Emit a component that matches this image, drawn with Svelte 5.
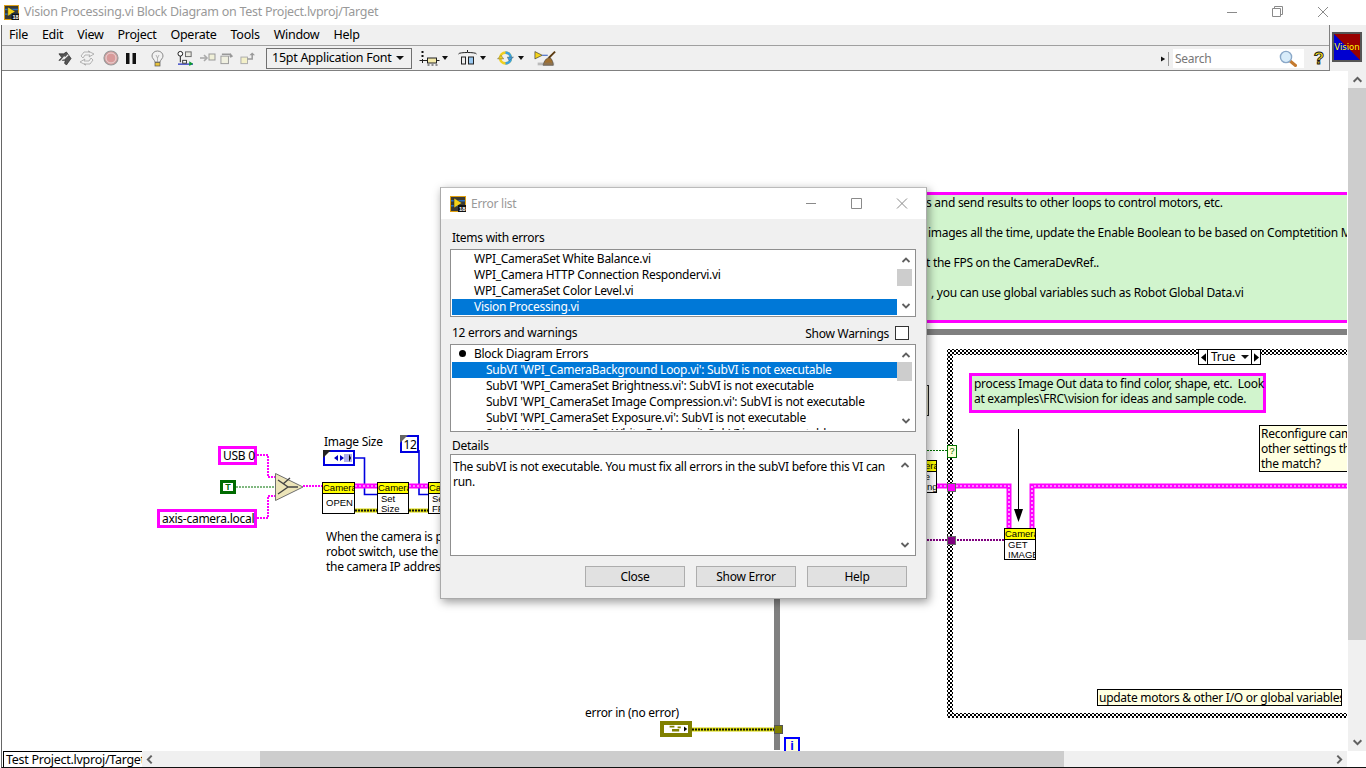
<script>
  const menus = ['File', 'Edit', 'View', 'Project', 'Operate', 'Tools', 'Window', 'Help'];
  const itemsWithErrors = [
    'WPI_CameraSet White Balance.vi',
    'WPI_Camera HTTP Connection Respondervi.vi',
    'WPI_CameraSet Color Level.vi',
    'Vision Processing.vi'
  ];
  const errors = [
    "SubVI 'WPI_CameraBackground Loop.vi': SubVI is not executable",
    "SubVI 'WPI_CameraSet Brightness.vi': SubVI is not executable",
    "SubVI 'WPI_CameraSet Image Compression.vi': SubVI is not executable",
    "SubVI 'WPI_CameraSet Exposure.vi': SubVI is not executable",
    "SubVI 'WPI_CameraSet White Balance.vi': SubVI is not executable"
  ];
  const nodes = [
    { x: 322, y: 482, w: 33, h: 32, lines: ['OPEN'], cls: 'open' },
    { x: 377, y: 482, w: 32, h: 32, lines: ['Set', 'Size'], cls: '' },
    { x: 428, y: 482, w: 32, h: 32, lines: ['Set', 'FPS'], cls: '' },
    { x: 1004, y: 528, w: 32, h: 32, lines: ['GET', 'IMAGE'], cls: '' }
  ];
  const greenLines = [
    { cls: 'gl1', t: 's and send results to other loops to control motors, etc.' },
    { cls: 'gl2', t: 'images all the time, update the Enable Boolean to be based on Comptetition Mode' },
    { cls: 'gl3', t: 't the FPS on the CameraDevRef..' },
    { cls: 'gl4', t: ', you can use global variables such as Robot Global Data.vi' }
  ];
</script>

{#snippet lvIcon()}
  <svg class="lv" viewBox="0 0 16 16">
    <rect x=".5" y=".5" width="15" height="15" fill="#3a3a34" stroke="#e0a010" />
    <rect x="1" y="4" width="14" height="1.5" fill="#2a6fc0" />
    <rect x="1" y="9" width="14" height="1.5" fill="#2a6fc0" />
    <path d="M4 2 L12 7 L4 12 Z" fill="#f3d21a" stroke="#222" stroke-width=".5" />
    <rect x="8" y="9" width="8" height="7" fill="#111" />
    <text x="9" y="15" class="lvt">18</text>
  </svg>
{/snippet}

{#snippet chevUp()}
  <svg class="chev" viewBox="0 0 10 6"><path d="M1.5 5 L5 1.5 L8.5 5" /></svg>
{/snippet}
{#snippet chevDown()}
  <svg class="chev" viewBox="0 0 10 6"><path d="M1.5 1 L5 4.5 L8.5 1" /></svg>
{/snippet}

<div class="app">
  <header class="title">
    {@render lvIcon()}
    <span class="title-text">Vision Processing.vi Block Diagram on Test Project.lvproj/Target</span>
    <div class="win">
      <svg viewBox="0 0 120 12"><path d="M0 6.5 H10" /><path d="M45.5 2.5 H53.5 V10.5 H45.5 Z M47.5 2.5 V0.5 H55.5 V8.5 H53.5" /><path d="M91 1 L101 11 M101 1 L91 11" /></svg>
    </div>
  </header>

  <div class="bars">
    <div class="bars-main">
      <nav class="menu">
        {#each menus as m}<span>{m}</span>{/each}
      </nav>
      <div class="toolbar">
        <div class="tools-a">
          <svg class="ic w15" viewBox="0 0 15 16"><path d="M1 3 L6 3 L9 1 L14 8 L9 15 L7 13 L8 10 L1 10 L4 7 Z" fill="#555" stroke="#222" stroke-width=".7" /><path d="M2 12 L7 6 L6 9 L11 4" stroke="#eee" stroke-width="1.2" fill="none" /></svg>
          <svg class="ic w16" viewBox="0 0 16 16"><path d="M2 6 L5 2 H11 L9 1 L15 4 L10 7 L11 5 H6 L4 8 Z M14 10 L11 14 H5 L7 15 L1 12 L6 9 L5 11 H10 L12 8 Z" fill="#f2f2f2" stroke="#aaa" stroke-width=".9" /></svg>
          <svg class="ic w16" viewBox="0 0 16 16"><circle cx="8" cy="8" r="7" fill="#d9a0a0" stroke="#999" stroke-width="1.2" /><circle cx="8" cy="8" r="5" fill="#d89a9a" stroke="#e9d6d6" /></svg>
          <svg class="ic w10" viewBox="0 0 10 11"><rect width="3.5" height="11" /><rect x="6.5" width="3.5" height="11" /></svg>
          <svg class="ic bulb" viewBox="0 0 13 17"><path d="M6.5 1 C3 1 1 3.5 1 6 C1 8.5 3.5 9.5 4 12 H9 C9.5 9.5 12 8.5 12 6 C12 3.5 10 1 6.5 1 Z" fill="#f1f1f1" stroke="#8a8a8a" /><path d="M5 5 L6.5 8 L8 5 M6.5 8 V12" stroke="#999" fill="none" stroke-width=".7" /><rect x="4" y="12.5" width="5" height="3.5" fill="#e8c23a" stroke="#555" stroke-width=".7" /></svg>
          <svg class="ic retain" viewBox="0 0 18 17"><circle cx="3.5" cy="4" r="2.5" fill="#fff" stroke="#111" /><path d="M3.5 6.5 V13" stroke="#111" /><path d="M1 15 H17" stroke="#1c2cc0" stroke-width="1.3" /><rect x="9" y="2" width="6" height="5" fill="#e8e8e0" stroke="#666" /><rect x="6" y="11" width="4" height="3" fill="#fff" stroke="#333" /><path d="M13 12 L17 14.5 L13 17 Z" fill="#0a9a30" /></svg>
          <svg class="ic step1" viewBox="0 0 16 12"><path d="M0 6 H6" stroke="#aaa" stroke-width="1.6" /><path d="M4 3 L7 6 L4 9" stroke="#aaa" stroke-width="1.6" fill="none" /><rect x="9" y="2" width="6" height="6" fill="#f0f0d8" stroke="#999" /></svg>
          <svg class="ic step2" viewBox="0 0 16 14"><rect x="1" y="5" width="8" height="8" fill="#f0f0e0" stroke="#999" /><path d="M2 3 H11 V6" stroke="#999" stroke-width="1.6" fill="none" /><path d="M9 5 L11 8 L14 5 Z" fill="#999" transform="rotate(-90 11 5)" /></svg>
          <svg class="ic step3" viewBox="0 0 16 14"><rect x="1" y="6" width="7" height="7" fill="#f3f0c8" stroke="#aaa" /><path d="M8 8 H13 V3" stroke="#999" stroke-width="1.6" fill="none" /><path d="M10 4 L13 1 L16 4 Z" fill="#999" /></svg>
        </div>
        <div class="font-select"><span>15pt Application Font</span><i class="tri"></i></div>
        <div class="tools-b">
          <div class="drop"><svg class="ic t22" viewBox="0 0 20 16"><rect x="2" y="1" width="2" height="2" /><rect x="2" y="5" width="2" height="2" /><path d="M0 10.5 H20" stroke="#222" /><path d="M3 9 V13" stroke="#222" /><rect x="8" y="8" width="9" height="5" fill="#f3e9a8" stroke="#222" /><path d="M8 15 H10 M12 15 H14 M16 15 H18" stroke="#222" /></svg><i class="tri s"></i></div>
          <div class="drop"><svg class="ic t22" viewBox="0 0 20 16"><path d="M1 4 C1 2 19 2 19 4" stroke="#222" fill="none" /><path d="M10 0 V2" stroke="#222" /><rect x="4" y="7" width="4" height="7" fill="#eee" stroke="#222" /><rect x="11" y="7" width="5" height="7" fill="#9ac8f0" stroke="#222" /></svg><i class="tri s"></i></div>
          <div class="drop"><svg class="ic t22" viewBox="0 0 20 18"><circle cx="10" cy="9" r="6" fill="none" stroke="#f0d020" stroke-width="3" /><path d="M10 3 A6 6 0 0 1 10 15" fill="none" stroke="#3aa0e0" stroke-width="3" /><path d="M5 6 L1 10 H8 Z" fill="#f0d020" stroke="#555" stroke-width=".5" /><path d="M14 12 L19 8 H12 Z" fill="#3aa0e0" stroke="#555" stroke-width=".5" /></svg><i class="tri s"></i></div>
          <svg class="ic clean" viewBox="0 0 24 18"><path d="M1 2 L9 6 L1 10 Z" fill="#f3d21a" stroke="#333" stroke-width=".7" /><path d="M9 6 H15" stroke="#1a4ac0" /><path d="M16 9 L23 2" stroke="#5a3a10" stroke-width="2" /><path d="M10 16 C12 10 15 8 18 9 C20 11 21 14 21 17 H10 Z" fill="#a07030" stroke="#333" stroke-width=".6" /><rect x="4" y="14" width="18" height="3" fill="#777" opacity=".45" /></svg>
        </div>
        <div class="tools-c">
          <svg class="mini" viewBox="0 0 6 6"><path d="M0 0 L5 3 L0 6 Z" /></svg>
          <i class="sep"></i>
          <div class="search">
            <span>Search</span>
            <svg viewBox="0 0 18 17"><path d="M10.5 10.5 L16.5 15.5" stroke="#c47a2e" stroke-width="3" stroke-linecap="round" /><circle cx="7" cy="7" r="5.6" fill="#d8ecfa" stroke="#8aa8c8" stroke-width="1.4" /></svg>
          </div>
          <svg class="help" viewBox="0 0 12 15"><text x="6" y="13" class="q">?</text></svg>
        </div>
      </div>
    </div>
    <div class="vi-panel">
      <div class="vi-icon">
        <svg viewBox="0 0 26 26"><rect width="26" height="26" fill="#0000d0" /><path d="M0 0 H26 V26 Z" fill="#990000" /><text x="13" y="15.5" class="vt">Vision</text></svg>
      </div>
    </div>
  </div>

  <div class="mid">
    <main class="canvas">
      <div class="diagram">
        <svg class="wires" viewBox="0 0 1366 768">
          <defs>
            <pattern id="chk" width="4" height="4" patternUnits="userSpaceOnUse">
              <rect width="4" height="4" fill="#fff" />
              <rect width="2" height="2" fill="#000" />
              <rect x="2" y="2" width="2" height="2" fill="#000" />
            </pattern>
          </defs>
          <!-- while loop -->
          <rect x="600" y="329" width="747" height="6" fill="#808080" />
          <rect x="774" y="590" width="6" height="160" fill="#808080" />
          <!-- case structure -->
          <rect x="947" y="349" width="400" height="6" fill="url(#chk)" />
          <rect x="947" y="349" width="6" height="369" fill="url(#chk)" />
          <rect x="947" y="713" width="400" height="5" fill="url(#chk)" />
          <!-- string wires -->
          <g class="pink-thin">
            <path d="M257 455 H268 V477 H276" />
            <path d="M257 518 H268 V496 H276" />
            <path d="M303 486 H322" />
          </g>
          <path d="M236 487 H276" class="green-dot" />
          <!-- blue wires -->
          <path d="M354 458 H364.500 V494.500 H377" class="blue" />
          <path d="M419 450 V494.500 H428" class="blue" />
          <!-- refnum wires -->
          <g class="ref">
            <path d="M355 486 H377" /><path d="M409 486 H428" />
            <path d="M936 486 H1009 V528" /><path d="M1032 528 V486 H1347" />
          </g>
          <g class="ref-in">
            <path d="M355 486 H377" /><path d="M409 486 H428" />
            <path d="M936 486 H1009 V528" /><path d="M1032 528 V486 H1347" />
          </g>
          <!-- error wires -->
          <g class="err"><path d="M355 510.500 H377" /><path d="M409 510.500 H428" /><path d="M692 729.500 H775" /></g>
          <g class="err-in"><path d="M355 510.500 H377" /><path d="M409 510.500 H428" /><path d="M692 729.500 H775" /></g>
          <!-- purple wire and green wire -->
          <path d="M927 540 H1004" class="purple" />
          <path d="M927 450.500 H947" class="green-dot" />
          <!-- tunnels -->
          <rect x="947.500" y="483.500" width="8" height="8" fill="#ff00ff" stroke="#666" />
          <rect x="947.500" y="536.500" width="8" height="8" fill="#800080" stroke="#666" />
          <rect x="774.500" y="725.500" width="8" height="8" fill="#808000" stroke="#555" />
          <!-- select node -->
          <path d="M275.500 473.500 L303 487 L275.500 500.500 Z" fill="#ece4b8" stroke="#6f6f6f" />
          <path d="M278 480 L288 487 L278 494 M288 487 H298 M283 484 L290 478" stroke="#444" stroke-width="1.4" fill="none" />
          <!-- annotation arrow -->
          <path d="M1018.500 429 V512" stroke="#000" />
          <path d="M1014 509 H1023 L1021 515 L1018.500 522 L1016 515 Z" fill="#000" />
        </svg>

        <div class="const str usb">USB 0</div>
        <div class="const str axis">axis-camera.local</div>
        <div class="bool"><b>T</b></div>
        <div class="lbl img-size">Image Size</div>
        <div class="cluster"><i class="corner"></i><svg viewBox="0 0 24 8"><path d="M7 4 L11 1 V7 Z M17 4 L13 1 V7 Z" fill="#0000c0" /><path d="M22 0 V8 L24 4 Z" /></svg></div>
        <div class="const num"><i class="corner c2"></i>12</div>

        {#each nodes as n}
          <div class="node" style:left="{n.x}px" style:top="{n.y}px" style:width="{n.w}px" style:height="{n.h}px">
            <div class="node-h">Camera</div>
            <div class="node-b" class:open={n.cls === 'open'}>{#each n.lines as l}<div>{l}</div>{/each}</div>
          </div>
        {/each}

        <div class="node tail"><div class="node-h">Camera</div><div class="node-b"><div>Write</div><div>Settings</div></div></div>
        <div class="beige"></div>

        <p class="lbl note-cam">When the camera is plugged into the<br />robot switch, use the<br />the camera IP address</p>

        <div class="green-note">
          {#each greenLines as g}<div class="gl {g.cls}">{g.t}</div>{/each}
        </div>

        <div class="selector">
          <i class="sel-btn"><svg viewBox="0 0 6 10"><path d="M0 5 L6 0 V10 Z" /></svg></i>
          <span class="sel-val">True<i class="tri"></i></span>
          <i class="sel-btn"><svg viewBox="0 0 6 10"><path d="M6 5 L0 0 V10 Z" /></svg></i>
        </div>

        <div class="pink-note">process Image Out data to find color, shape, etc.&nbsp; Look<br />at examples\FRC\vision for ideas and sample code.</div>
        <div class="yellow recon">Reconfigure camera<br />other settings that<br />the match?</div>
        <div class="yellow update">update motors &amp; other I/O or global variables</div>
        <div class="term">?</div>

        <div class="lbl err-lbl">error in (no error)</div>
        <div class="err-ctl"><div class="err-in-box"><svg viewBox="0 0 22 10"><path d="M3 1 H9 V3 H3 Z M6 5 H15 V8 H6 Z M13 2 H17 V4 H13 Z" fill="#808000" /><path d="M21 2 L25 5 L21 8 Z" /></svg></div></div>
        <div class="iter">i</div>

        <section class="dialog">
          <header class="d-title">
            {@render lvIcon()}
            <span>Error list</span>
            <svg viewBox="0 0 102 12"><path d="M0 5.500 H10" /><path d="M45.500 .5 H55.500 V10.500 H45.500 Z" /><path d="M91 .5 L101 10.500 M101 .5 L91 10.500" /></svg>
          </header>
          <div class="d-body">
            <div class="d-lab first">Items with errors</div>
            <div class="list l1">
              <div class="rows">
                {#each itemsWithErrors as it, i}<div class="row top" class:sel={i === 3}>{it}</div>{/each}
              </div>
              <div class="vs">{@render chevUp()}<i class="thumb t1"></i>{@render chevDown()}</div>
            </div>
            <div class="d-lab between">
              <span>12 errors and warnings</span>
              <span class="show">Show Warnings<i class="check"></i></span>
            </div>
            <div class="list l2">
              <div class="rows">
                <div class="row top"><i class="dot"></i>Block Diagram Errors</div>
                {#each errors as e, i}<div class="row sub" class:sel={i === 0}>{e}</div>{/each}
              </div>
              <div class="vs">{@render chevUp()}<i class="thumb t2"></i>{@render chevDown()}</div>
            </div>
            <div class="d-lab det">Details</div>
            <div class="list l3">
              <p>The subVI is not executable. You must fix all errors in the subVI before this VI can run.</p>
              <div class="vs plain">{@render chevUp()}{@render chevDown()}</div>
            </div>
            <div class="btns">
              <button>Close</button>
              <button>Show Error</button>
              <button>Help</button>
            </div>
          </div>
        </section>
      </div>
    </main>
    <aside class="vbar">
      <svg class="chev big" viewBox="0 0 10 6"><path d="M1.5 5 L5 1.5 L8.5 5" /></svg>
      <i class="vthumb"></i>
      <svg class="chev big" viewBox="0 0 10 6"><path d="M1.5 1 L5 4.5 L8.5 1" /></svg>
    </aside>
  </div>

  <footer class="bottom">
    <div class="tab">Test Project.lvproj/Target</div>
    <div class="hbar">
      <svg class="chev side" viewBox="0 0 6 10"><path d="M5 1.500 L1.500 5 L5 8.500" /></svg>
      <i class="hthumb"></i>
      <svg class="chev side" viewBox="0 0 6 10"><path d="M1 1.500 L4.500 5 L1 8.500" /></svg>
    </div>
  </footer>
</div>

<style>
  :global(body) { margin: 0; background: #fff; }
  .app {
    width: 1366px; height: 768px; overflow: hidden; display: flex; flex-direction: column;
    font: 12px/16px "Noto Sans", "Open Sans", sans-serif; letter-spacing: -.27px; color: #000; background: #fff;
  }
  .title { height: 25px; flex: none; display: flex; align-items: center; padding-left: 4px; box-sizing: border-box; position: relative; padding-bottom: 1px; }
  .lv { width: 15px; height: 15px; flex: none; }
  .lvt { font: bold 6px "Liberation Sans", sans-serif; fill: #fff; letter-spacing: 0; }
  .title-text { margin-left: 5px; color: #999; font-size: 12.5px; }
  .win { margin-left: auto; width: 120px; height: 12px; margin-right: 19px; }
  .win svg { width: 120px; height: 12px; display: block; overflow: visible; fill: none; stroke: #8a8a8a; }

  .bars { display: flex; height: 46px; flex: none; margin-left: 1px; border-left: 1px solid #666; }
  .bars-main { width: 1327px; flex: none; }
  .menu { height: 20px; background: #f0f0f0; display: flex; gap: 14px; padding-left: 7px; align-items: center; font-size: 12.500px; border-bottom: 1px solid #a0a0a0; }
  .toolbar { height: 24px; background: #f0f0f0; border-bottom: 1px solid #808080; display: flex; align-items: center; position: relative; }
  .tools-a { display: flex; align-items: center; margin-left: 56px; width: 208px; }
  .ic { display: block; flex: none; fill: #111; }
  .w15 { width: 14px; height: 15px; margin-right: 7px; }
  .w16 { width: 16px; height: 16px; margin-right: 8px; }
  .w10 { width: 10px; height: 11px; margin-left: -1px; margin-right: 15px; }
  .bulb { width: 13px; height: 17px; margin-right: 13px; }
  .retain { width: 17px; height: 16px; margin-right: 6px; }
  .step1 { width: 16px; height: 12px; margin-right: 4px; }
  .step2 { width: 15px; height: 14px; margin-right: 5px; }
  .step3 { width: 15px; height: 14px; }
  .font-select { width: 146px; height: 21px; box-sizing: border-box; border: 1px solid #707070; display: flex; align-items: center; padding: 0 7px 0 5px; justify-content: space-between; font-size: 12.500px; }
  .tri { display: inline-block; width: 0; height: 0; border-left: 4px solid transparent; border-right: 4px solid transparent; border-top: 4px solid #111; }
  .tri.s { border-left-width: 3px; border-right-width: 3px; margin-left: 1px; }
  .tools-b { display: flex; align-items: center; margin-left: 7px; gap: 9px; }
  .drop { display: flex; align-items: center; gap: 1px; }
  .t22 { width: 21px; height: 16px; }
  .clean { width: 22px; height: 18px; margin-left: 1px; }
  .tools-c { position: absolute; left: 1158px; top: 3px; display: flex; align-items: center; height: 19px; }
  .mini { width: 5px; height: 6px; fill: #111; margin-left: 1px; }
  .sep { width: 1px; height: 14px; background: #999; margin: 0 4px 0 2px; }
  .search { width: 131px; height: 19px; background: #fff; display: flex; align-items: center; justify-content: space-between; padding: 0 7px 0 2px; box-sizing: border-box; color: #777; }
  .search svg { width: 18px; height: 17px; }
  .help { width: 12px; height: 15px; margin-left: 9px; }
  .q { font: bold 17px "Liberation Sans", sans-serif; fill: #ffe81a; stroke: #111; stroke-width: .9; text-anchor: middle; letter-spacing: 0; }
  .vi-panel { flex: 1; background: #fff; border-left: 1px solid #808080; background: #f0f0f0; border-bottom: 0; padding: 7px 0 0 2px; }
  .vi-icon { width: 30px; height: 30px; border: 2px solid #555; box-sizing: border-box; outline: 1px solid #eee; }
  .vi-icon svg { width: 26px; height: 26px; display: block; }
  .vt { font: 8.5px "DejaVu Sans", sans-serif; fill: #ff0; text-anchor: middle; letter-spacing: 0; }

  .mid { flex: 1; display: flex; min-height: 0; margin-left: 1px; border-left: 1px solid #666; }
  .canvas { width: 1345px; flex: none; position: relative; overflow: hidden; background: #fff; }
  .diagram { position: absolute; left: -2px; top: -71px; width: 1366px; height: 768px; }
  .wires { position: absolute; inset: 0; width: 1366px; height: 768px; fill: none; }
  .pink-thin path { stroke: #ff00ff; stroke-width: 2; stroke-dasharray: 2 1; fill: none; }
  .green-dot { stroke: #007000; stroke-width: 1; stroke-dasharray: 2 1; fill: none; }
  .blue { stroke: #0000e0; stroke-width: 1.6; fill: none; }
  .ref path { stroke: #ff00ff; stroke-width: 5; fill: none; }
  .ref-in path { stroke: #fff; stroke-width: 1.2; stroke-dasharray: 2 2; fill: none; }
  .err path { stroke: #808000; stroke-width: 4; fill: none; }
  .err-in path { stroke: #ffff00; stroke-width: 2; fill: none; stroke-dasharray: 2 1; }
  .err-in path { stroke: #111; }
  .err path { stroke: #d8d800; }
  .purple { stroke: #800080; stroke-width: 2; stroke-dasharray: 2 1; fill: none; }

  .const { position: absolute; box-sizing: border-box; background: #fff; white-space: nowrap; }
  .str { border: 3px solid #ff00ff; line-height: 13px; padding-left: 2px; }
  .usb { left: 218px; top: 446px; width: 39px; height: 19px; }
  .axis { left: 157px; top: 509px; width: 100px; height: 19px; }
  .bool { position: absolute; left: 220px; top: 480px; width: 16px; height: 14px; background: #006b00; display: flex; align-items: center; justify-content: center; }
  .bool b { width: 10px; height: 8px; background: #fff; color: #006b00; font: bold 9px/8px "Liberation Sans", sans-serif; letter-spacing: 0; text-align: center; }
  .lbl { position: absolute; margin: 0; white-space: nowrap; }
  .img-size { left: 324px; top: 434px; }
  .cluster { position: absolute; left: 323px; top: 450px; width: 32px; height: 16px; border: 2px solid #0000e0; box-sizing: border-box; background: #fff; padding: 2px 1px; }
  .cluster svg { display: block; width: 26px; height: 8px; background: linear-gradient(90deg, transparent 70%, #b0b0ee 70%); }
  .corner { position: absolute; left: -2px; top: -2px; border-top: 8px solid #222; border-right: 8px solid transparent; }
  .num { left: 400px; top: 435px; width: 19px; height: 18px; border: 2px solid #0000e0; line-height: 15px; text-align: center; padding-left: 1px; }
  .c2 { border-top-color: #666; }
  .node { position: absolute; box-sizing: border-box; border: 1px solid #000; background: #fff; overflow: hidden; font: 9px/10px "Liberation Sans", sans-serif; letter-spacing: 0; }
  .node-h { height: 10px; background: #ffff00; border-bottom: 1px solid #000; text-align: center; font-size: 9.500px; line-height: 10px; }
  .node-b { padding: 0 0 0 3px; font-size: 9.500px; }
  .node-b div { line-height: 10px; }
  .node-b.open { padding-top: 4px; }
  .tail { left: 904px; top: 460px; width: 33px; height: 33px; }
  .beige { position: absolute; left: 900px; top: 385px; width: 29px; height: 31px; box-sizing: border-box; border: 1px solid #222; background: #e8e4c8; }
  .note-cam { left: 326px; top: 529px; line-height: 15px; }

  .green-note { position: absolute; left: 600px; top: 192px; width: 747px; height: 131px; box-sizing: border-box; border-top: 3px solid #ff00ff; border-bottom: 3px solid #ff00ff; background: #d1f4cd; overflow: hidden; }
  .gl { position: absolute; white-space: nowrap; }
  .gl1 { left: 326px; top: 0px; }
  .gl2 { left: 328px; top: 30px; }
  .gl3 { left: 326px; top: 60px; }
  .gl4 { left: 331px; top: 90px; }
  .selector { position: absolute; left: 1198px; top: 349px; width: 63px; height: 16px; display: flex; box-sizing: border-box; border: 1px solid #000; background: #fff; }
  .sel-btn { width: 8px; flex: none; display: flex; align-items: center; justify-content: center; }
  .sel-btn svg { width: 5px; height: 9px; fill: #000; }
  .sel-btn:first-child { border-right: 1px solid #000; }
  .sel-btn:last-child { border-left: 1px solid #000; }
  .sel-val { flex: 1; padding-left: 3px; display: flex; align-items: center; justify-content: space-between; padding-right: 2px; line-height: 14px; font-style: normal; }
  .pink-note { position: absolute; left: 969px; top: 373px; width: 297px; height: 40px; box-sizing: border-box; border: 3px solid #ff00ff; background: #d1f4cd; padding: 0 0 0 2px; line-height: 15px; white-space: nowrap; }
  .yellow { position: absolute; box-sizing: border-box; border: 1px solid #000; background: #ffffe1; white-space: nowrap; padding-left: 1px; overflow: hidden; }
  .recon { left: 1259px; top: 425px; width: 120px; height: 47px; line-height: 15px; }
  .update { left: 1097px; top: 689px; width: 245px; height: 17px; line-height: 15px; }
  .term { position: absolute; left: 947px; top: 445px; width: 8px; height: 11px; border: 1px solid #007000; background: #ffffd8; color: #007000; font: 9px/11px "Liberation Sans", sans-serif; text-align: center; letter-spacing: 0; }
  .err-lbl { left: 585px; top: 705px; }
  .err-ctl { position: absolute; left: 660px; top: 721px; width: 32px; height: 16px; background: #808000; box-sizing: border-box; padding: 3px; }
  .err-in-box { background: #fff; height: 10px; box-sizing: border-box; border: 1px solid #808000; }
  .err-in-box svg { display: block; width: 24px; height: 8px; overflow: visible; }
  .iter { position: absolute; left: 784px; top: 737px; width: 16px; height: 18px; box-sizing: border-box; border: 2px solid #0000ff; background: #ffffe1; color: #0000ff; font: bold 13px/14px "Liberation Sans", sans-serif; text-align: center; letter-spacing: 0; }

  .dialog { position: absolute; left: 440px; top: 187px; width: 487px; height: 412px; box-sizing: border-box; background: #f0f0f0; border: 1px solid #aaa; border-top: 1px solid #bbb; box-shadow: 2px 3px 9px rgba(0,0,0,.4); display: flex; flex-direction: column; }
  .d-title { height: 31px; flex: none; background: #fff; display: flex; align-items: center; padding-left: 9px; color: #999; }
  .d-title .lv { width: 16px; height: 16px; }
  .d-title span { margin-left: 5px; }
  .d-title svg:last-child { width: 102px; height: 12px; margin-left: auto; margin-right: 18px; overflow: visible; fill: none; stroke: #8a8a8a; }
  .d-body { flex: 1; display: flex; flex-direction: column; padding: 0 10px 0 9px; }
  .d-lab { height: 18px; line-height: 18px; padding-left: 2px; flex: none; }
  .d-lab.first { margin-top: 10px; height: 20px; line-height: 18px; }
  .between { display: flex; justify-content: space-between; padding-right: 7px; margin-top: 7px; height: 20px; }
  .show { display: flex; align-items: center; }
  .check { width: 12px; height: 12px; background: #fff; border: 1px solid #333; margin-left: 6px; display: block; margin-top: -2px; }
  .det { margin-top: 5px; height: 17px; }
  .list { box-sizing: border-box; border: 1px solid #8f8f8f; padding: 1px; background: #fff; display: flex; flex: none; overflow: hidden; }
  .l1 { height: 68px; }
  .l2 { height: 88px; }
  .l3 { height: 102px; }
  .rows { width: 445px; flex: none; overflow: hidden; }
  .row { height: 16px; line-height: 16px; white-space: nowrap; position: relative; }
  .top { padding-left: 22px; }
  .sub { padding-left: 34px; }
  .sel { background: #0078d7; color: #fff; }
  .dot { position: absolute; left: 7px; top: 4px; width: 7px; height: 7px; border-radius: 50%; background: #000; }
  .vs { flex: 1; display: flex; flex-direction: column; align-items: center; }
  .vs .thumb { display: block; background: #cdcdcd; width: 15px; align-self: flex-start; }
  .t1 { height: 17px; margin-top: 6px; }
  .t2 { height: 19px; margin-top: 4px; }
  .chev { width: 10px; height: 6px; fill: none; stroke: #606060; stroke-width: 1.8; flex: none; display: block; }
  .vs .chev { margin-top: 6px; }
  .vs .chev:last-child { margin-top: auto; margin-bottom: 6px; }
  .l3 p { margin: 3px 0 0 1px; width: 443px; line-height: 15px; flex: none; }
  .plain { margin-left: 0; }
  .btns { display: flex; justify-content: flex-end; gap: 11px; margin-top: 10px; padding-right: 9px; }
  .btns button { width: 100px; height: 21px; padding: 0; background: #e1e1e1; border: 1px solid #adadad; font: inherit; letter-spacing: inherit; color: #000; }

  .vbar { flex: none; width: 18px; margin-left: 1px; background: #f0f0f0; display: flex; flex-direction: column; align-items: center; }
  .big { width: 11px; height: 7px; margin-top: 5px; }
  .big:last-child { margin-top: auto; margin-bottom: 5px; }
  .vthumb { display: block; background: #cdcdcd; width: 100%; height: 552px; margin-top: 5px; }
  .bottom { height: 17px; flex: none; display: flex; margin-left: 1px; border-left: 1px solid #666; border-bottom: 1px solid #111; box-sizing: content-box; height: 16px; }
  .tab { width: 139px; height: 15px; margin-left: 1px; border-top: 1px solid #000; border-left: 1px solid #000; line-height: 15px; padding-left: 2px; box-sizing: border-box; white-space: nowrap; font-size: 12.500px; height: 16px; }
  .hbar { width: 1205px; flex: none; background: #f0f0f0; display: flex; align-items: center; }
  .side { width: 7px; height: 11px; margin-left: 4px; }
  .hthumb { display: block; background: #cdcdcd; height: 100%; width: 804px; margin-left: 107px; }
  .side:last-child { margin-left: auto; margin-right: 4px; }
</style>
